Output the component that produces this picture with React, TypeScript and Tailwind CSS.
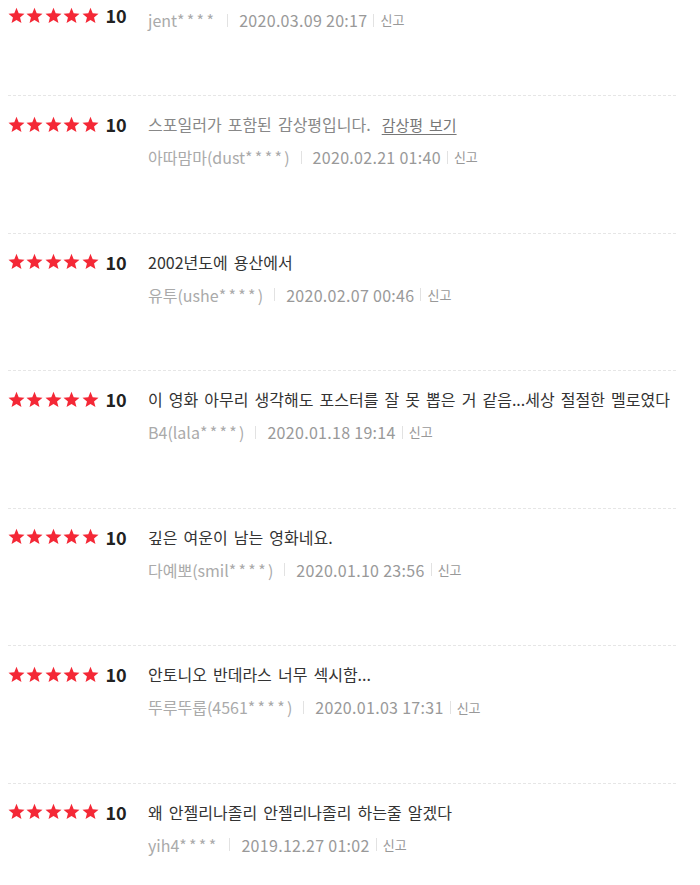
import React from 'react';

type Review = {
  text?: string;
  spoiler?: boolean;
  user: string;
  date: string;
};

const reviews: Review[] = [
  { user: 'jent****', date: '2020.03.09 20:17' },
  { spoiler: true, user: '아따맘마(dust****)', date: '2020.02.21 01:40' },
  { text: '2002년도에 용산에서', user: '유투(ushe****)', date: '2020.02.07 00:46' },
  {
    text: '이 영화 아무리 생각해도 포스터를 잘 못 뽑은 거 같음...세상 절절한 멜로였다',
    user: 'B4(lala****)',
    date: '2020.01.18 19:14',
  },
  { text: '깊은 여운이 남는 영화네요.', user: '다예뽀(smil****)', date: '2020.01.10 23:56' },
  { text: '안토니오 반데라스 너무 섹시함...', user: '뚜루뚜룹(4561****)', date: '2020.01.03 17:31' },
  { text: '왜 안젤리나졸리 안젤리나졸리 하는줄 알겠다', user: 'yih4****', date: '2019.12.27 01:02' },
];

const Star: React.FC = () => (
  <svg width="17" height="17" viewBox="0 0 24 24" className="shrink-0">
    <path
      d="M12 1.2l3.1 7.6 8.2.6-6.3 5.3 2 8-7-4.4-7 4.4 2-8L.7 9.4l8.2-.6z"
      fill="#f42836"
    />
  </svg>
);

const Score: React.FC = () => (
  <div className="flex items-center h-[22px] w-[140px] shrink-0">
    <div className="flex gap-[1.4px]">
      <Star />
      <Star />
      <Star />
      <Star />
      <Star />
    </div>
    <span className="ml-[7px] text-[18px] font-bold text-[#222] leading-none tracking-[-0.3px]">10</span>
  </div>
);

// asterisks in the masked ids are drawn a bit wider
const maskUser = (user: string) => {
  const i = user.indexOf('*');
  if (i < 0) return user;
  const rest = user.slice(i);
  const stars = rest.replace(/[^*]/g, '');
  const tail = rest.slice(stars.length);
  return (
    <>
      {user.slice(0, i)}
      <span className="tracking-[2.3px]">{stars}</span>
      {tail}
    </>
  );
};

const Meta: React.FC<{ user: string; date: string; className?: string }> = ({ user, date, className }) => (
  <div className={`flex items-center h-[20px] text-[16px] ${className ?? ''}`}>
    <span className="text-[#aaa]">{maskUser(user)}</span>
    <span className="mx-[11px] w-px h-[13px] bg-[#e2e2e2]" />
    <span className="text-[#999] tracking-[0.3px]">{date}</span>
    <span className="mx-[6px] w-px h-[13px] bg-[#e2e2e2]" />
    <span className="text-[13px] text-[#999]">신고</span>
  </div>
);

export default function App() {
  return (
    <div
      className="bg-white min-h-[885px] pl-2 pr-6"
      style={{ fontFamily: '"Noto Sans CJK KR", "Liberation Sans", sans-serif' }}
    >
      <ul className="w-[668px]">
        {reviews.map((r, i) =>
          i === 0 ? (
            <li key={i} className="flex pt-[4px] pb-[65px] border-b border-dashed border-[#e6e6e6]">
              <Score />
              <Meta user={r.user} date={r.date} className="mt-[6px]" />
            </li>
          ) : (
            <li key={i} className="flex pt-[17px] pb-[65.6px] border-b border-dashed border-[#e6e6e6] last:border-b-0">
              <Score />
              <div>
                <p className="h-[22px] leading-[22px] text-[16px] text-[#333] whitespace-nowrap [word-spacing:2.5px]">
                  {r.spoiler ? (
                    <>
                      <span className="text-[#888]">스포일러가 포함된 감상평입니다.</span>
                      <a className="ml-[11px] text-[15px] text-[#777] underline underline-offset-[3px]">감상평 보기</a>
                    </>
                  ) : (
                    r.text
                  )}
                </p>
                <Meta user={r.user} date={r.date} className="mt-[12px]" />
              </div>
            </li>
          )
        )}
      </ul>
    </div>
  );
}
